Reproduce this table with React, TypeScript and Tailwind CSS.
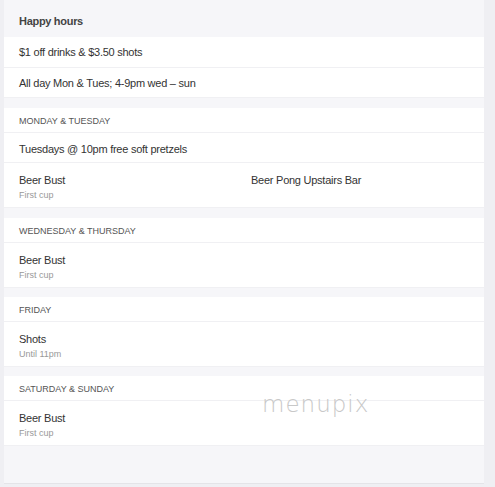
import React from "react";

type Item = { title: string; sub?: string };

function Section({ label, rows }: { label: string; rows: Item[][] }) {
  return (
    <div className="mt-[10px] bg-white">
      <div className="h-[25px] flex items-center pt-[4px] pl-[15px] text-[9px] text-[#555] uppercase border-b border-[#f0f0f3]">
        {label}
      </div>
      {rows.map((r, i) => (
        <div key={i} className="grid grid-cols-[232px_1fr] border-b border-[#f0f0f3]">
          {r.map((it, j) => (
            <div key={j} className={`pl-[15px] ${it.sub !== undefined ? "h-[44px] pt-[10px]" : "h-[29px] flex items-center pt-[2px]"}`}>
              <div className="text-[11px] tracking-[-0.25px] text-[#333] leading-[14px] whitespace-nowrap">{it.title}</div>
              {it.sub !== undefined && (
                <div className="text-[9px] text-[#999] leading-[12px] mt-[2px]">{it.sub}</div>
              )}
            </div>
          ))}
        </div>
      ))}
    </div>
  );
}

export default function App() {
  return (
    <div
      className="w-[495px] h-[487px] bg-[#efeff3] flex relative overflow-hidden"
      style={{ fontFamily: '"Liberation Sans", Arial, sans-serif' }}
    >
      <div className="ml-[4px] w-[480px] h-[484px] bg-[#f6f6f9] border-b border-[#e4e4e8] flex flex-col">
        <div className="h-[37px] flex items-center pt-[5px] pl-[15px] text-[11px] tracking-[-0.3px] font-bold text-[#444]">
          Happy hours
        </div>
        <div className="bg-white">
          <div className="h-[31px] flex items-center pt-[1px] pl-[15px] text-[11px] tracking-[-0.25px] text-[#333] border-b border-[#f0f0f3]">
            $1 off drinks &amp; $3.50 shots
          </div>
          <div className="h-[30px] flex items-center pt-[2px] pl-[15px] text-[11px] tracking-[-0.25px] text-[#333] border-b border-[#f0f0f3]">
            All day Mon &amp; Tues; 4-9pm wed – sun
          </div>
        </div>
        <Section
          label="Monday & Tuesday"
          rows={[
            [{ title: "Tuesdays @ 10pm free soft pretzels" }],
            [
              { title: "Beer Bust", sub: "First cup" },
              { title: "Beer Pong Upstairs Bar", sub: "" },
            ],
          ]}
        />
        <Section label="Wednesday & Thursday" rows={[[{ title: "Beer Bust", sub: "First cup" }]]} />
        <div className="-mt-[1px]">
          <Section label="Friday" rows={[[{ title: "Shots", sub: "Until 11pm" }]]} />
        </div>
        <div className="-mt-[1px]">
          <Section label="Saturday & Sunday" rows={[[{ title: "Beer Bust", sub: "First cup" }]]} />
        </div>
      </div>
      <div
        className="absolute left-[262px] top-[393px] text-[23px] text-[#c8c8c8] tracking-[1px] leading-none pointer-events-none"
        style={{ fontFamily: '"DejaVu Sans", sans-serif', fontWeight: 200 }}
      >
        menupix
      </div>
    </div>
  );
}
